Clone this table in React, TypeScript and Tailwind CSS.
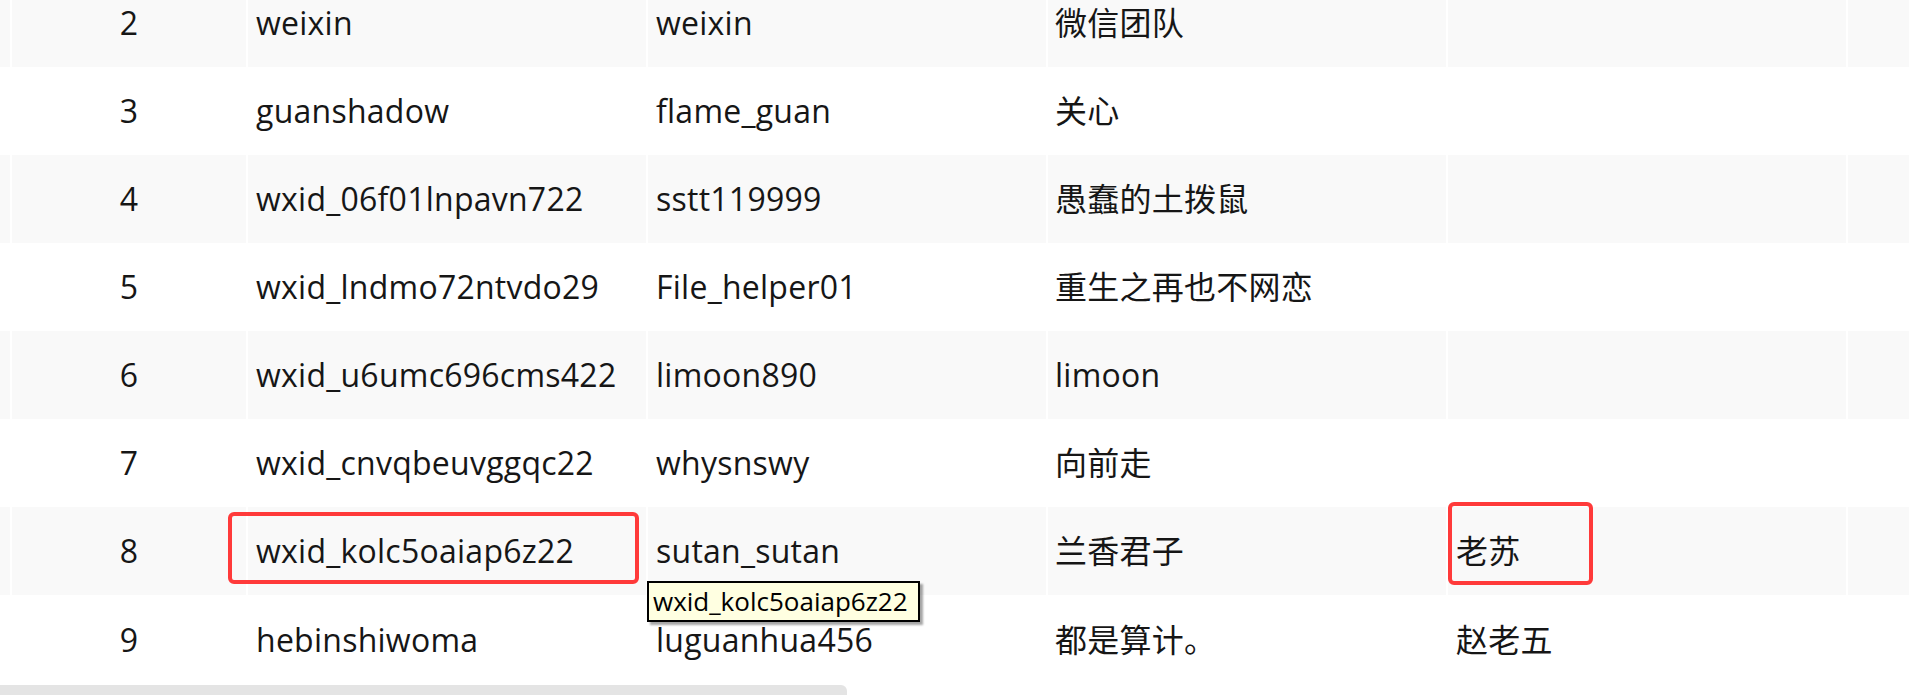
import React from "react";

type Row = {
    idx: number;
    wxid: string;
    account: string;
    nickname: string;
    remark: string;
};

const rows: Row[] = [
    { idx: 2, wxid: "weixin", account: "weixin", nickname: "微信团队", remark: "" },
    { idx: 3, wxid: "guanshadow", account: "flame_guan", nickname: "关心", remark: "" },
    { idx: 4, wxid: "wxid_06f01lnpavn722", account: "sstt119999", nickname: "愚蠢的土拨鼠", remark: "" },
    { idx: 5, wxid: "wxid_lndmo72ntvdo29", account: "File_helper01", nickname: "重生之再也不网恋", remark: "" },
    { idx: 6, wxid: "wxid_u6umc696cms422", account: "limoon890", nickname: "limoon", remark: "" },
    { idx: 7, wxid: "wxid_cnvqbeuvggqc22", account: "whysnswy", nickname: "向前走", remark: "" },
    { idx: 8, wxid: "wxid_kolc5oaiap6z22", account: "sutan_sutan", nickname: "兰香君子", remark: "老苏" },
    { idx: 9, wxid: "hebinshiwoma", account: "luguanhua456", nickname: "都是算计。", remark: "赵老五" },
];

const TableRow = ({ row, shaded, last }: { row: Row; shaded: boolean; last: boolean }) => {
    const cell = shaded ? "bg-[#f9f9f9]" : "bg-white";
    return (
        <div
            className={`grid grid-cols-[10px_234px_398px_398px_398px_398px_1fr] gap-x-[2px] ${last ? "h-[90px]" : "h-[88px]"}`}
        >
            <div className={cell} />
            <div className={`${cell} flex items-center justify-center`}>{row.idx}</div>
            <div className={`${cell} flex items-center pl-[8px]`}>{row.wxid}</div>
            <div className={`${cell} flex items-center pl-[8px]`}>{row.account}</div>
            <div className={`${cell} flex items-center pl-[7px]`}>{row.nickname}</div>
            <div className={`${cell} flex items-center pl-[8px]`}>{row.remark}</div>
            <div className={cell} />
        </div>
    );
};

export default function App() {
    return (
        <div
            className="relative h-[695px] w-full overflow-hidden bg-white text-[32px] tracking-[0.25px] text-[#161616] flex flex-col"
            style={{ fontFamily: "'Open Sans', 'Noto Sans CJK SC', sans-serif" }}
        >
            <div className="flex-1 overflow-hidden">
                <div className="-mt-[21px] flex flex-col">
                    {rows.map((r, i) => (
                        <TableRow key={r.idx} row={r} shaded={i % 2 === 0} last={i === rows.length - 1} />
                    ))}
                </div>
            </div>

            {/* horizontal scrollbar */}
            <div className="h-[10px] shrink-0">
                <div className="h-full w-[847px] bg-[#e4e4e4] rounded-tr-[6px]" />
            </div>

            {/* highlight boxes */}
            <div className="absolute left-[228px] top-[512px] w-[411px] h-[72px] border-4 border-[#ff3a3a] rounded-[6px]" />
            <div className="absolute left-[1448px] top-[502px] w-[145px] h-[83px] border-4 border-[#ff3a3a] rounded-[6px]" />

            {/* tooltip */}
            <div className="absolute left-[647px] top-[581px] w-[273px] h-[41px] border-2 border-black bg-[#ffffe1] text-[26px] tracking-normal text-black flex items-center pl-[4px] shadow-[3px_3px_2px_rgba(0,0,0,0.35)]">
                wxid_kolc5oaiap6z22
            </div>
        </div>
    );
}
